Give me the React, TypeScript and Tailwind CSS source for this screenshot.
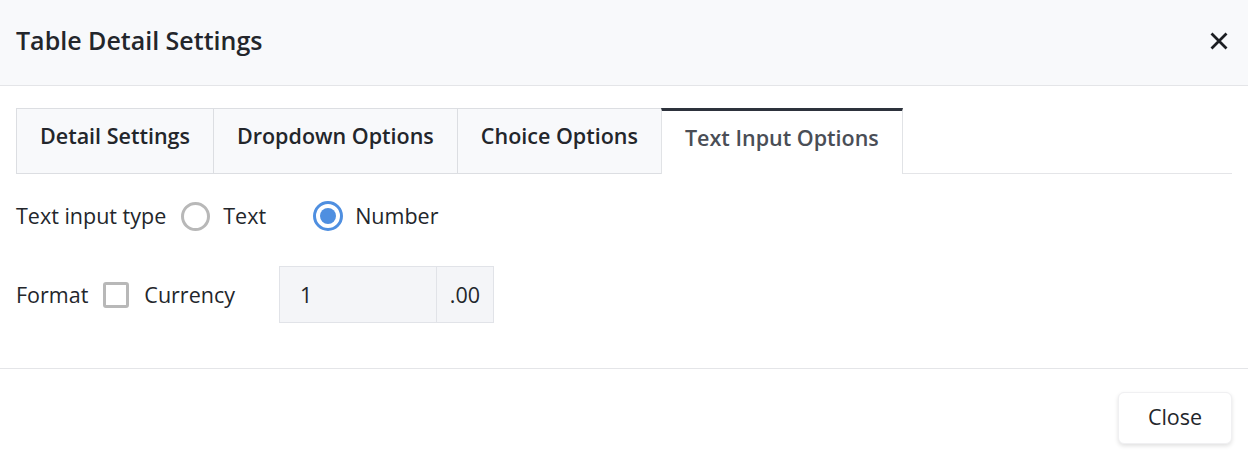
const tabs = ["Detail Settings", "Dropdown Options", "Choice Options", "Text Input Options"];

export default function App() {
    const active = 3;

    return (
        <div className="flex h-[460px] w-[1248px] flex-col bg-white text-[#23262b]" style={{ fontFamily: '"Open Sans", sans-serif' }}>
            {/* header */}
            <div className="flex h-[86px] items-center justify-between border-b border-[#e4e5e8] bg-[#f8f9fb] pb-[4px] pl-4 pr-[20px]">
                <h2 className="text-[25px] font-semibold">Table Detail Settings</h2>
                <button className="text-[#1c1e22]">
                    <svg width="18" height="18" viewBox="0 0 18 18" fill="none" stroke="currentColor" strokeWidth="2.8">
                        <path d="M1.5 1.5l15 15M16.5 1.5l-15 15" />
                    </svg>
                </button>
            </div>

            {/* body */}
            <div className="flex-1 px-4 pt-[22px]">
                <div className="flex border-b border-[#e4e5e8]">
                    {tabs.map((t, i) => (
                        <div
                            key={t}
                            className={
                                i === active
                                    ? "-mb-px flex h-[66px] items-center border-x border-t-[3px] border-x-[#e1e3e6] border-t-[#2d323c] bg-white px-[23px] pb-[8px] text-[21.5px] font-semibold text-[#4a4e56]"
                                    : "-mb-px flex h-[66px] items-center border-y border-l border-[#dcdee2] bg-[#f8f9fb] px-[23px] pb-[10px] text-[21.5px] font-semibold text-[#23262b]"
                            }
                        >
                            {t}
                        </div>
                    ))}
                </div>

                <div className="mt-[26px] flex items-center text-[21.5px]">
                    <span>Text input type</span>
                    <span className="ml-[15px] h-[29px] w-[29px] rounded-full border-[3px] border-[#b8b8b8]" />
                    <span className="ml-[13px]">Text</span>
                    <span className="ml-[47px] flex h-[30px] w-[30px] items-center justify-center rounded-full border-[3px] border-[#4f8fe0]">
                        <span className="h-[16px] w-[16px] rounded-full bg-[#4f8fe0]" />
                    </span>
                    <span className="ml-[12px]">Number</span>
                </div>

                <div className="mt-[34px] flex items-center text-[21.5px]">
                    <span>Format</span>
                    <span className="ml-[15px] h-[26px] w-[26px] rounded-[3px] border-[3px] border-[#b8b8b8]" />
                    <span className="ml-[15px]">Currency</span>
                    <div className="ml-[44px] flex h-[57px] border border-[#e1e3e8] bg-[#f4f5f8]">
                        <span className="flex w-[157px] items-center border-r border-[#e1e3e8] pl-[20px]">1</span>
                        <span className="flex w-[56px] items-center justify-center">.00</span>
                    </div>
                </div>
            </div>

            {/* footer */}
            <div className="flex h-[92px] items-center justify-end border-t border-[#e4e5e8] pr-4 pt-[6px]">
                <button className="h-[52px] w-[114px] rounded-md border border-[#f0f0f2] bg-white text-[21.5px] shadow-[0_2px_4px_rgba(0,0,0,0.12)]">
                    Close
                </button>
            </div>
        </div>
    );
}
